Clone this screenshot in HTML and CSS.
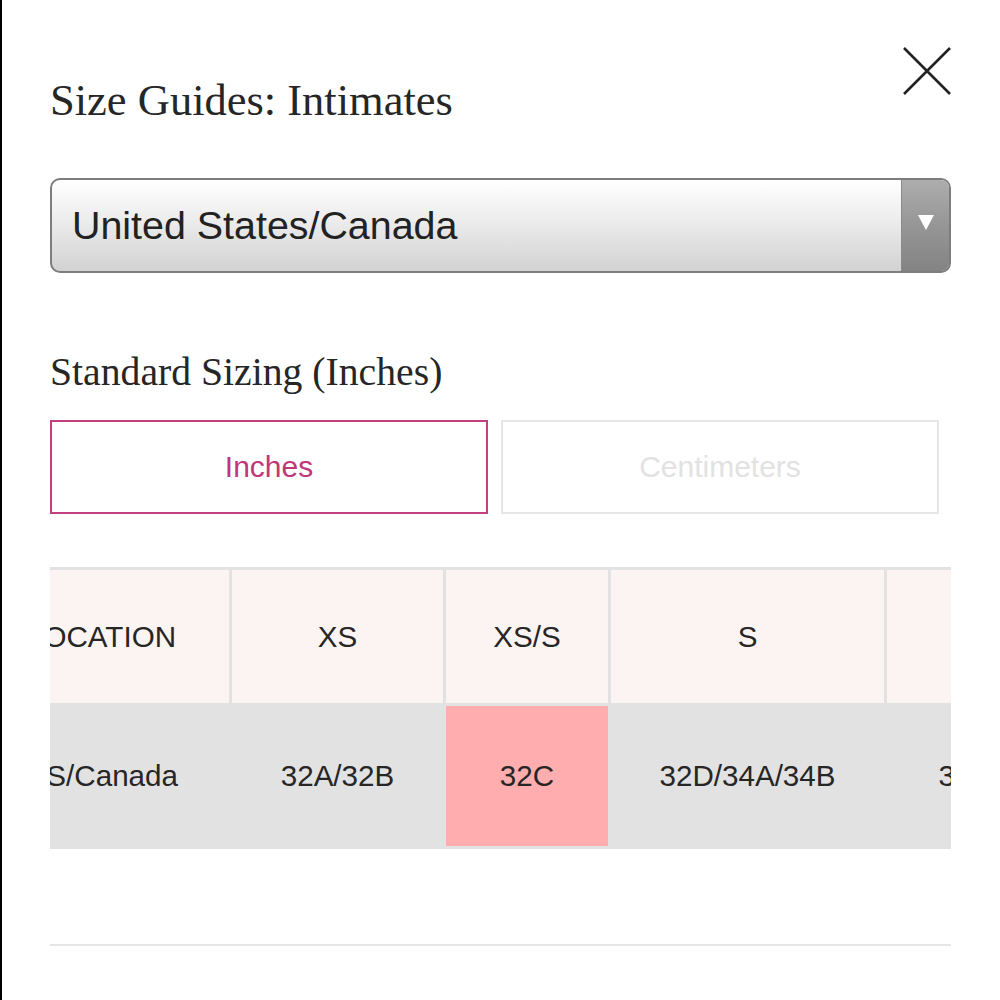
FILE: index.html
```html
<!DOCTYPE html>
<html lang="en">
<head>
    <meta charset="UTF-8">
    <meta name="viewport" content="width=device-width, initial-scale=1.0">
    <title>Size Guides: Intimates</title>
    <link rel="stylesheet" href="styles.css">
</head>
<body>
    <div class="modal">
        <header class="modal-header">
            <h1 class="modal-title">Size Guides: Intimates</h1>
            <button class="close-btn" aria-label="Close">
                <svg width="48" height="48" viewBox="0 0 48 48">
                    <path d="M1 1 L47 47 M47 1 L1 47" stroke="#222" stroke-width="2.6" fill="none"/>
                </svg>
            </button>
        </header>

        <div class="region-select">
            <span class="region-value">United States/Canada</span>
            <span class="region-arrow">
                <svg width="16" height="15" viewBox="0 0 16 15">
                    <path d="M0 0 L16 0 L8 15 Z" fill="#fff"/>
                </svg>
            </span>
        </div>

        <h2 class="section-title">Standard Sizing (Inches)</h2>

        <div class="unit-toggle">
            <button class="unit-btn active">Inches</button>
            <button class="unit-btn">Centimeters</button>
        </div>

        <div class="chart-scroll">
            <table class="size-chart">
                <colgroup>
                    <col class="col-location">
                    <col class="col-xs">
                    <col class="col-xss">
                    <col class="col-s">
                    <col class="col-sm">
                </colgroup>
                <thead>
                    <tr>
                        <th>LOCATION</th>
                        <th>XS</th>
                        <th>XS/S</th>
                        <th>S</th>
                        <th>S/M</th>
                    </tr>
                </thead>
                <tbody>
                    <tr>
                        <td>US/Canada</td>
                        <td>32A/32B</td>
                        <td class="current">32C</td>
                        <td>32D/34A/34B</td>
                        <td>34C/34D</td>
                    </tr>
                </tbody>
            </table>
        </div>

        <hr class="divider">
    </div>
</body>
</html>
```

FILE: styles.css
```css
* {
    margin: 0;
    padding: 0;
    box-sizing: border-box;
}

body {
    font-family: 'Liberation Sans', Arial, Helvetica, sans-serif;
    background-color: #ffffff;
    color: #262626;
}

.modal {
    min-height: 100vh;
    border-left: 2px solid #000;
    padding: 0 49px 0 48px;
}

.modal-header {
    display: flex;
    justify-content: space-between;
    align-items: flex-start;
    padding-top: 47px;
}

.modal-title {
    font-family: 'Liberation Serif', 'Times New Roman', serif;
    font-weight: normal;
    font-size: 44.5px;
    line-height: 1;
    margin-top: 31px;
    color: #262626;
}

.close-btn {
    background: none;
    border: none;
    width: 48px;
    height: 48px;
    cursor: pointer;
}

.close-btn svg {
    display: block;
}

/* native-looking select box */
.region-select {
    margin-top: 55px;
    height: 95px;
    display: flex;
    align-items: stretch;
    border: 2px solid #7d7d7d;
    border-radius: 10px;
    overflow: hidden;
    background: linear-gradient(to bottom, #ffffff 0%, #ececec 45%, #d2d2d2 100%);
}

.region-value {
    flex: 1;
    display: flex;
    align-items: center;
    padding-left: 20px;
    font-size: 39.4px;
    color: #222;
}

.region-arrow {
    width: 48px;
    display: flex;
    align-items: center;
    justify-content: center;
    border-left: 1px solid #8a8a8a;
    background: linear-gradient(to bottom, #adadad 0%, #969696 50%, #838383 100%);
    padding-bottom: 6px;
}

.section-title {
    font-family: 'Liberation Serif', 'Times New Roman', serif;
    font-weight: normal;
    font-size: 39.7px;
    line-height: 1;
    margin-top: 80px;
    color: #262626;
}

.unit-toggle {
    display: flex;
    gap: 13px;
    margin-top: 28px;
    padding-right: 12px;
}

.unit-btn {
    flex: 1;
    height: 94px;
    background: #fff;
    border: 2px solid #e6e6e6;
    font-family: 'Liberation Sans', Arial, Helvetica, sans-serif;
    font-size: 30px;
    color: #e2e2e2;
    cursor: pointer;
}

.unit-btn.active {
    border-color: #c2407f;
    color: #c1367b;
}

/* table is scrolled sideways, first column partly hidden */
.chart-scroll {
    margin-top: 53px;
    overflow: hidden;
}

.size-chart {
    table-layout: fixed;
    width: 1139px;
    margin-left: -79px;
    border-collapse: separate;
    border-spacing: 3px;
    background-color: #e3e2e2;
    font-size: 29.6px;
    color: #262626;
}

.col-location { width: 255px; }
.col-xs { width: 211px; }
.col-xss { width: 162px; }
.col-s { width: 273px; }
.col-sm { width: 220px; }

.size-chart th,
.size-chart td {
    text-align: center;
    white-space: nowrap;
    font-weight: normal;
}

.size-chart th {
    height: 133px;
    background-color: #fcf4f2;
}

.size-chart td {
    height: 140px;
    background-color: #e3e2e2;
}

.size-chart td.current {
    background-color: #ffadaf;
}

.divider {
    margin-top: 95px;
    border: none;
    border-top: 2px solid #e6e6e6;
}
```
